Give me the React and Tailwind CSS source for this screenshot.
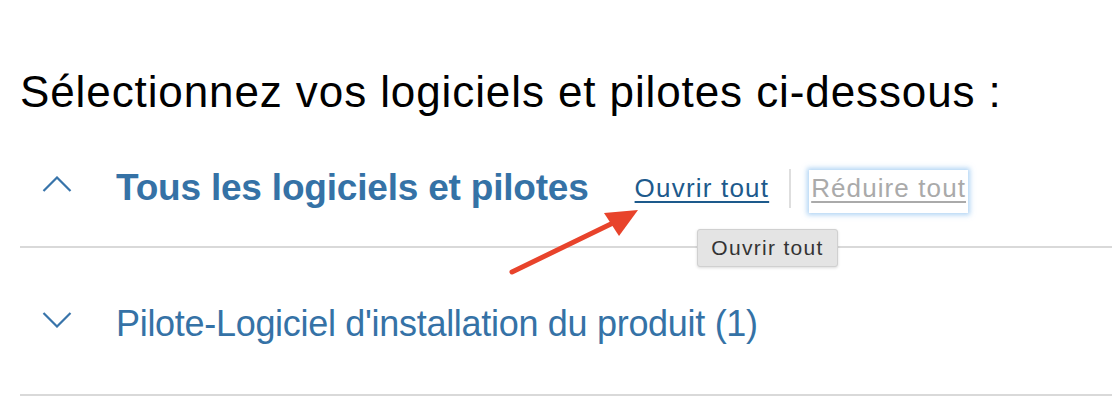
import React from "react";

const Chevron = ({ up }) => (
  <svg width="30" height="16" viewBox="0 0 30 16" fill="none" stroke="#3874aa" strokeWidth="2.2">
    {up ? <path d="M1.5 15 L15 1.5 L28.5 15" /> : <path d="M1.5 1 L15 14.5 L28.5 1" />}
  </svg>
);

const App = () => {
  return (
    <div className="relative w-[1112px] h-[408px] bg-white overflow-hidden" style={{ fontFamily: '"Liberation Sans", Arial, sans-serif' }}>
      <div className="pl-[20px]">
        <h1 className="pt-[70px] text-[44px] leading-[44px] text-black tracking-[0.9px]">
          Sélectionnez vos logiciels et pilotes ci-dessous :
        </h1>

        {/* en-tête du groupe */}
        <div className="h-[134px] pt-[16px] flex items-center border-b-2 border-[#d9d9d9]">
          <div className="w-[96px] pl-[22px] mb-[8px]">
            <Chevron up />
          </div>
          <span className="text-[37px] leading-[44px] font-bold text-[#3572a6] tracking-[-0.2px]">
            Tous les logiciels et pilotes
          </span>
          <div className="ml-[46px] mt-[7px] h-[43px] pt-[5px]">
            <a className="text-[26px] leading-[26px] text-[#1d5a8c] tracking-[1.2px] underline decoration-2 underline-offset-[4px]">
              Ouvrir tout
            </a>
          </div>
          <span className="ml-[20px] w-[2px] h-[39px] bg-[#dedede]" />
          <div className="ml-[18px] mt-[7px] h-[43px] pt-[5px] px-[2px] bg-white shadow-[0_0_5px_2px_rgba(110,175,235,0.55)]">
            <a className="text-[26px] leading-[26px] text-[#aaaaaa] tracking-[1.1px] underline decoration-2 underline-offset-[4px]">
              Réduire tout
            </a>
          </div>
        </div>

        <div className="h-[148px] pt-[5px] flex items-center border-b-2 border-[#d9d9d9]">
          <div className="w-[96px] pl-[22px] mb-[8px]">
            <Chevron />
          </div>
          <span className="text-[36px] leading-[44px] text-[#3572a6] tracking-[-0.3px]">
            Pilote-Logiciel d'installation du produit (1)
          </span>
        </div>
      </div>

      {/* infobulle */}
      <div className="absolute left-[697px] top-[229px] w-[141px] h-[38px] bg-[#e4e4e4] border border-[#d0d0d0] rounded-[3px] shadow-[0_1px_3px_rgba(0,0,0,0.15)] flex items-center justify-center text-[21px] text-[#333] tracking-[1.3px]">
        Ouvrir tout
      </div>

      <svg className="absolute left-0 top-0" width="1112" height="408">
        <line x1="512" y1="272" x2="615" y2="222" stroke="#e8432b" strokeWidth="5" strokeLinecap="round" />
        <polygon points="638,210 604,213 619,236" fill="#e8432b" />
      </svg>
    </div>
  );
};

export default App;
